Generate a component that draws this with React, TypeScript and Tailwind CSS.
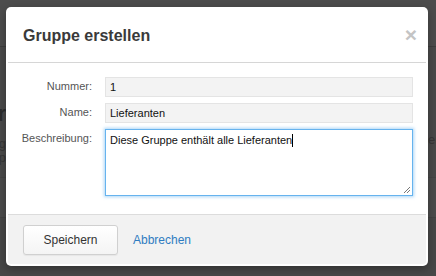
import React from "react";

export default function App() {
  const font = "font-['Liberation_Sans','Helvetica_Neue',Arial,sans-serif]";
  return (
    <div className={`relative w-[436px] h-[276px] overflow-hidden bg-[#494949] ${font}`}>
      {/* underlying page (dimmed by overlay) */}
      <div className="flex flex-col h-full">
        <div className="h-[47px] bg-[#4c4c4c] border-b border-[#3d3d3d] shrink-0" />
        <div className="flex h-[130px] shrink-0">
          <div className="w-[6px] flex flex-col items-end overflow-hidden">
            <div className="mt-[56px] whitespace-nowrap text-[22px] font-bold leading-[22px] text-[#2c2c2c]">
              Gruppenverwalter
            </div>
            <div className="mt-[12px] whitespace-nowrap text-[13px] leading-[14px] text-[#363636]">
              Legen Sie neue Gruppen an, um Lieferanten zu gruppieren, sortieren und g
            </div>
            <div className="whitespace-nowrap text-[13px] leading-[14px] text-[#363636]">
              und zu verwalten. Alle Gruppen werden gesp
            </div>
          </div>
          <div className="flex-1" />
          <div className="w-[8px] overflow-hidden">
            <div className="mt-[86px] whitespace-nowrap text-[13px] leading-[14px] text-[#363636]">
              er
            </div>
          </div>
        </div>
        <div className="h-[40px] bg-[#4b4b4b] border-t border-[#444] shrink-0" />
        <div className="flex-1 bg-[#474747] border-t border-[#424242]" />
      </div>

      {/* modal */}
      <div className="absolute left-[6px] top-[7px] w-[422px] h-[259px] bg-white rounded-[5px] p-[2px] flex flex-col shadow-[0_3px_9px_rgba(0,0,0,0.3)]">
        <div className="h-[54px] shrink-0 border-b border-[#d6d6d6] flex items-center justify-between pl-[15px] pr-[9px]">
          <h3 className="text-[16px] font-bold text-[#3a3a3a] leading-none">Gruppe erstellen</h3>
          <span className="text-[21px] font-bold leading-none text-[#c4c4c4] -mt-[2px]">×</span>
        </div>

        <div className="flex-1 pt-[14px] pr-[13px]">
          <div className="grid grid-cols-[84px_1fr] gap-x-[13px] gap-y-[6px] text-[11px] text-[#222]">
            <label className="text-right leading-[18px] text-[#555]">Nummer:</label>
            <div className="h-[20px] bg-[#f3f3f3] border border-[#e4e4e4] pl-[4px] leading-[18px] text-[#111]">1</div>

            <label className="text-right leading-[18px] text-[#555]">Name:</label>
            <div className="h-[20px] bg-[#f3f3f3] border border-[#e4e4e4] pl-[4px] leading-[18px] text-[#111]">Lieferanten</div>

            <label className="text-right leading-[18px] text-[#555]">Beschreibung:</label>
            <div className="relative h-[67px] bg-white border border-[#66b3ee] shadow-[0_0_3px_1px_rgba(102,179,238,0.55)] pl-[4px] pt-[3px] leading-[14px] text-[#111]">
              <span>Diese Gruppe enthält alle Lieferanten</span>
              <span className="inline-block w-[1px] h-[13px] bg-black align-[-3px]" />
              <svg className="absolute right-[1px] bottom-[1px]" width="8" height="8" viewBox="0 0 8 8">
                <line x1="1" y1="7" x2="7" y2="1" stroke="#777" strokeWidth="1" />
                <line x1="4" y1="7" x2="7" y2="4" stroke="#777" strokeWidth="1" />
              </svg>
            </div>
          </div>
        </div>

        <div className="h-[50px] shrink-0 border-t border-[#dcdcdc] bg-[#f2f2f2] rounded-b-[3px] flex items-start pt-[10px] pl-[15px] gap-[15px]">
          <button className="w-[95px] h-[30px] rounded-[3px] border border-[#d0d0d0] bg-gradient-to-b from-white to-[#f4f4f4] text-[12px] text-[#333] shadow-[0_1px_1px_rgba(0,0,0,0.05)]">
            Speichern
          </button>
          <a className="h-[30px] flex items-center text-[12px] text-[#2f7cc1]">Abbrechen</a>
        </div>
      </div>
    </div>
  );
}
